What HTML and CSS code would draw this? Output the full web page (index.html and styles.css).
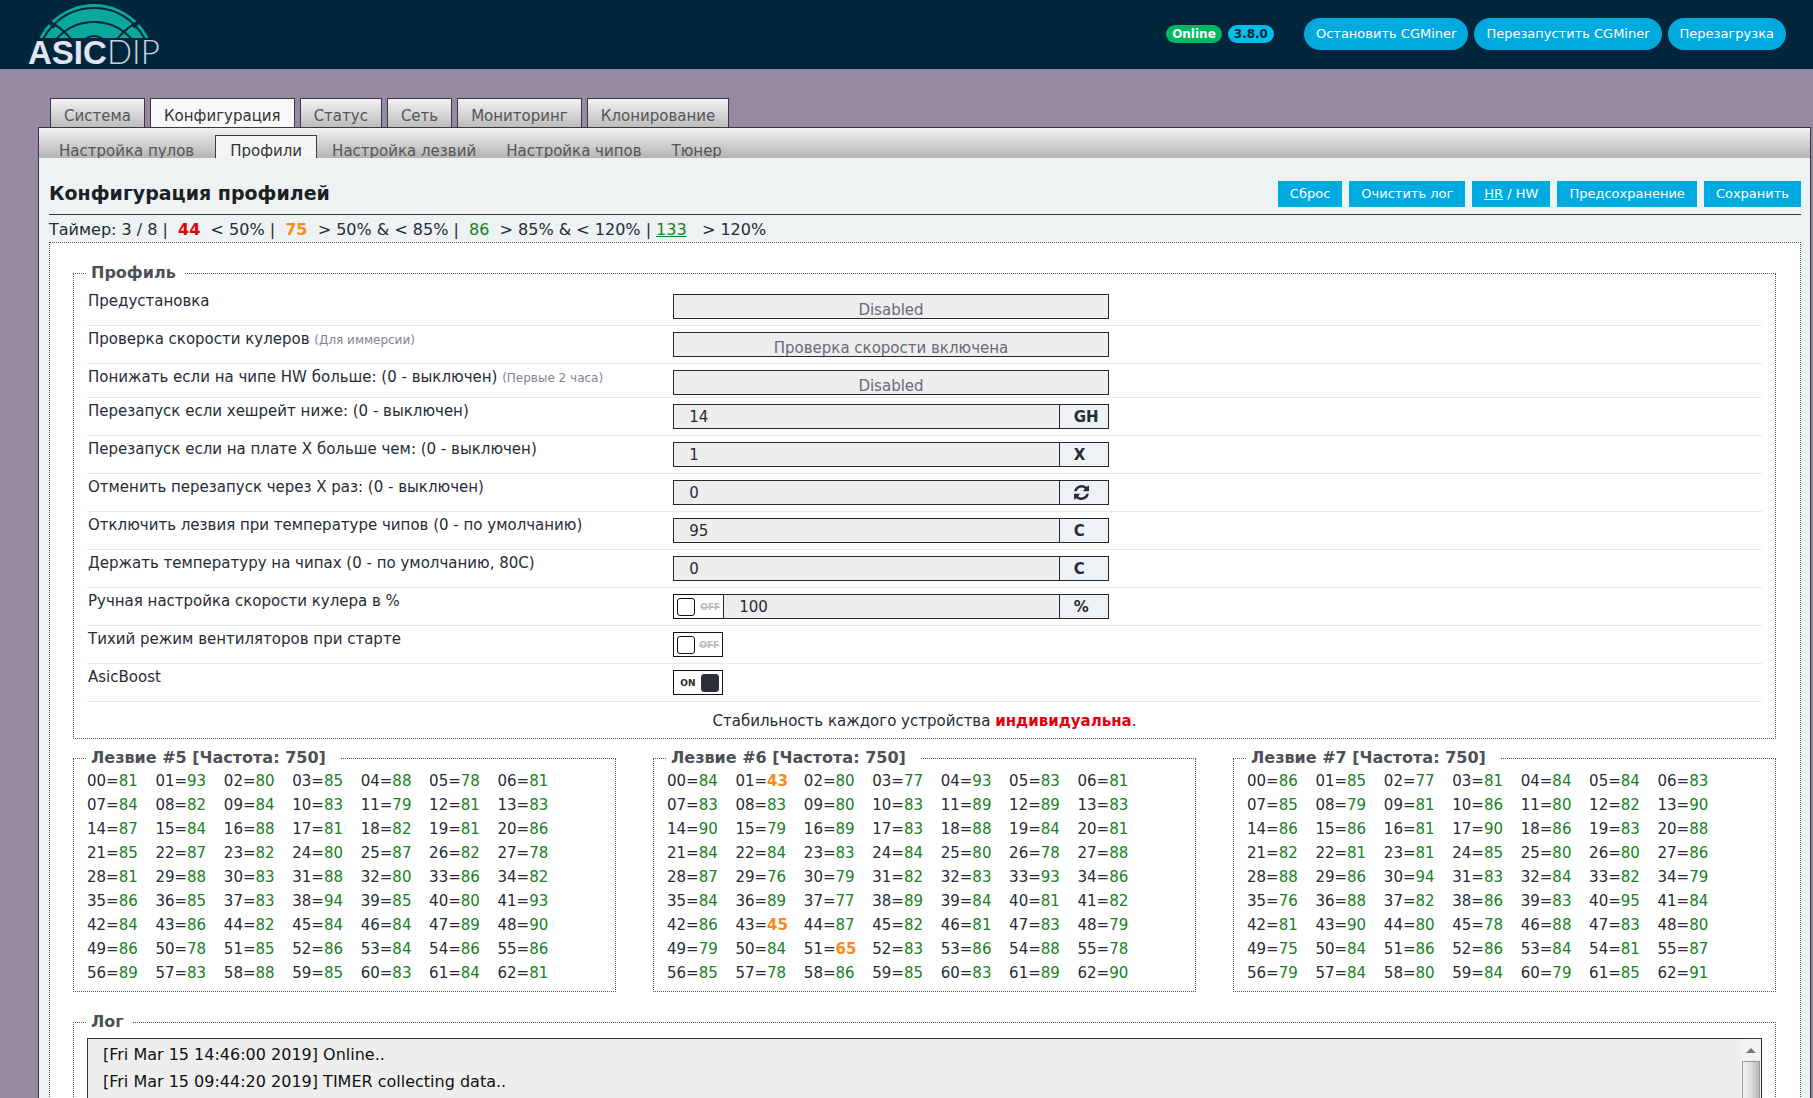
FILE: index.html
```html
<!DOCTYPE html>
<html lang="ru">
<head>
<meta charset="utf-8">
<title>Конфигурация профилей</title>
<link rel="stylesheet" href="styles.css">
</head>
<body>
<header class="topbar">
  <a class="logo" href="#" aria-label="ASICDIP">
    <svg width="150" height="69" viewBox="0 0 150 69">
      <defs>
        <clipPath id="dome"><rect x="0" y="0" width="150" height="38"/></clipPath>
      </defs>
      <g clip-path="url(#dome)">
        <circle cx="74" cy="65" r="61" fill="#0aa79d"/>
        <g fill="none" stroke="#00263c">
          <circle cx="74" cy="65" r="57" stroke-width="2"/>
          <circle cx="74" cy="72" r="50" stroke-width="2"/>
          <circle cx="74" cy="50" r="14" stroke-width="2"/>
          <path d="M28 21 Q40 26 51 39" stroke-width="2"/>
          <path d="M120 21 Q108 26 97 39" stroke-width="2"/>
          <path d="M24 17 L35 27 M124 17 L113 27" stroke-width="4"/>
        </g>
      </g>
      <text class="logo-bold" x="8" y="64">ASIC</text>
      <text class="logo-thin" x="87" y="64">DIP</text>
    </svg>
  </a>
  <div class="top-actions">
    <span class="badge badge-online">Online</span>
    <span class="badge badge-version">3.8.0</span>
    <button class="pill pill-first" type="button">Остановить CGMiner</button>
    <button class="pill" type="button">Перезапустить CGMiner</button>
    <button class="pill" type="button">Перезагрузка</button>
  </div>
</header>

<div class="shell">
  <nav class="tabs">
    <a class="tab" href="#">Система</a>
    <a class="tab active" href="#">Конфигурация</a>
    <a class="tab" href="#">Статус</a>
    <a class="tab" href="#">Сеть</a>
    <a class="tab" href="#">Мониторинг</a>
    <a class="tab" href="#">Клонирование</a>
  </nav>
  <main class="panel">
    <nav class="subtabs">
      <a class="subtab" href="#">Настройка пулов</a>
      <a class="subtab active" href="#">Профили</a>
      <a class="subtab" href="#">Настройка лезвий</a>
      <a class="subtab" href="#">Настройка чипов</a>
      <a class="subtab" href="#">Тюнер</a>
    </nav>

    <div class="content">
      <div class="heading">
        <h1>Конфигурация профилей</h1>
        <div class="actions">
          <button class="btn" type="button">Сброс</button>
          <button class="btn" type="button">Очистить лог</button>
          <button class="btn" type="button"><u>HR</u> / HW</button>
          <button class="btn" type="button">Предсохранение</button>
          <button class="btn" type="button">Сохранить</button>
        </div>
      </div>
      <p class="legend-line">Таймер: 3 / 8 |&nbsp; <b class="low">44</b>&nbsp; &lt; 50% |&nbsp; <b class="mid">75</b>&nbsp; &gt; 50% &amp; &lt; 85% |&nbsp; <span class="good">86</span>&nbsp; &gt; 85% &amp; &lt; 120% | <u class="good">133</u>&nbsp;&nbsp; &gt; 120%</p>

      <form class="board">
        <fieldset class="group profile">
          <legend>Профиль</legend>
          <div class="row">
            <label for="preset">Предустановка</label>
            <select id="preset"><option>Disabled</option></select>
          </div>
          <div class="row">
            <label for="fancheck">Проверка скорости кулеров <small>(Для иммерсии)</small></label>
            <select id="fancheck"><option>Проверка скорости включена</option></select>
          </div>
          <div class="row tight">
            <label for="hw">Понижать если на чипе HW больше: (0 - выключен) <small>(Первые 2 часа)</small></label>
            <select id="hw"><option>Disabled</option></select>
          </div>
          <div class="row">
            <label for="rate">Перезапуск если хешрейт ниже: (0 - выключен)</label>
            <div class="field"><input id="rate" type="text" value="14"><span class="unit">GH</span></div>
          </div>
          <div class="row">
            <label for="boardx">Перезапуск если на плате X больше чем: (0 - выключен)</label>
            <div class="field"><input id="boardx" type="text" value="1"><span class="unit">X</span></div>
          </div>
          <div class="row">
            <label for="cancel">Отменить перезапуск через X раз: (0 - выключен)</label>
            <div class="field"><input id="cancel" type="text" value="0"><span class="unit"><svg width="15" height="15" viewBox="0 0 1536 1536" fill="#262c36"><path d="M1511 928q0 5-1 7-64 268-268 434.500T764 1536q-146 0-282.500-55T238 1324l-129 129q-19 19-45 19t-45-19-19-45V960q0-26 19-45t45-19h448q26 0 45 19t19 45-19 45l-137 137q71 66 161 102t187 36q134 0 250-65t186-179q11-17 53-117 8-23 30-23h192q13 0 22.500 9.500t9.500 22.500zm25-800v448q0 26-19 45t-45 19h-448q-26 0-45-19t-19-45 19-45l138-138Q969 256 768 256q-134 0-250 65T332 500q-11 17-53 117-8 23-30 23H50q-13 0-22.500-9.500T18 608v-7q65-268 270-434.500T768 0q146 0 284 55.500T1297 212l130-129q19-19 45-19t45 19 19 45z"/></svg></span></div>
          </div>
          <div class="row">
            <label for="maxtemp">Отключить лезвия при температуре чипов (0 - по умолчанию)</label>
            <div class="field"><input id="maxtemp" type="text" value="95"><span class="unit">C</span></div>
          </div>
          <div class="row">
            <label for="keeptemp">Держать температуру на чипах (0 - по умолчанию, 80C)</label>
            <div class="field"><input id="keeptemp" type="text" value="0"><span class="unit">C</span></div>
          </div>
          <div class="row">
            <label for="fanspeed">Ручная настройка скорости кулера в %</label>
            <div class="field"><span class="toggle"><input type="checkbox" aria-label="Ручная настройка"><span class="off">OFF</span></span><input id="fanspeed" type="text" value="100"><span class="unit">%</span></div>
          </div>
          <div class="row">
            <label for="quiet">Тихий режим вентиляторов при старте</label>
            <span class="toggle"><input id="quiet" type="checkbox"><span class="off">OFF</span></span>
          </div>
          <div class="row">
            <label for="boost">AsicBoost</label>
            <span class="toggle"><span class="on">ON</span><input id="boost" type="checkbox" checked></span>
          </div>
          <p class="note">Стабильность каждого устройства <b>индивидуальна</b>.</p>
        </fieldset>

        <div class="blades" id="blades"></div>

        <fieldset class="group log">
          <legend>Лог</legend>
          <div class="logbox">
            <div class="lines">
              <p>[Fri Mar 15 14:46:00 2019] Online..</p>
              <p>[Fri Mar 15 09:44:20 2019] TIMER collecting data..</p>
            </div>
            <div class="scrollbar"><span class="arrow"></span><span class="thumb"></span></div>
          </div>
        </fieldset>
      </form>
    </div>
  </main>
</div>
<script src="blades.js"></script>
</body>
</html>
```
FILE: blades.js
```js
// Chip rates of each blade, in chip order, seven to a row.
const blades = [
  { id: 5, freq: 750, chips: `81 93 80 85 88 78 81 84 82 84 83 79 81 83 87 84 88 81 82 81 86
    85 87 82 80 87 82 78 81 88 83 88 80 86 82 86 85 83 94 85 80 93
    84 86 82 84 84 89 90 86 78 85 86 84 86 86 89 83 88 85 83 84 81` },
  { id: 6, freq: 750, chips: `84 43 80 77 93 83 81 83 83 80 83 89 89 83 90 79 89 83 88 84 81
    84 84 83 84 80 78 88 87 76 79 82 83 93 86 84 89 77 89 84 81 82
    86 45 87 82 81 83 79 79 84 65 83 86 88 78 85 78 86 85 83 89 90` },
  { id: 7, freq: 750, chips: `86 85 77 81 84 84 83 85 79 81 86 80 82 90 86 86 81 90 86 83 88
    82 81 81 85 80 80 86 88 86 94 83 84 82 79 76 88 82 86 83 95 84
    81 90 80 78 88 83 80 75 84 86 86 84 81 87 79 84 80 84 79 85 91` }
];

const perRow = 7;

function cell(value, index) {
  const tag = value < 70 ? `<b class="mid">${value}</b>` : `<span class="good">${value}</span>`;
  return `<td>${String(index).padStart(2, "0")}=${tag}</td>`;
}

document.getElementById("blades").innerHTML = blades.map(({ id, freq, chips }) => {
  const cells = chips.split(/\s+/).map((v, i) => cell(Number(v), i));
  let rows = "";
  for (let i = 0; i < cells.length; i += perRow) {
    rows += `<tr>${cells.slice(i, i + perRow).join("")}</tr>`;
  }
  return `<fieldset class="group blade"><legend>Лезвие #${id} [Частота: ${freq}]</legend><table>${rows}</table></fieldset>`;
}).join("");
```
FILE: styles.css
```css
* {
  box-sizing: border-box;
}

body {
  margin: 0;
  height: 100vh;
  overflow: hidden;
  background: #958aa1;
  color: #262c36;
  font: 15px/24px "DejaVu Sans", Verdana, sans-serif;
}

h1,
p {
  margin: 0;
}

a {
  color: inherit;
  text-decoration: none;
}

button,
input,
select {
  font: inherit;
}

/* Top bar */
.topbar {
  display: flex;
  justify-content: space-between;
  align-items: center;
  height: 69px;
  padding: 0 27px 0 20px;
  background: #00263c;
}

.logo {
  display: flex;
}

.logo svg {
  overflow: visible;
}

.logo-bold {
  font: bold 33px "Liberation Sans", sans-serif;
  fill: #dfe3f2;
}

.logo-thin {
  font: 300 33px Lato, sans-serif;
  fill: #c9d3e2;
}

.top-actions {
  display: flex;
  align-items: center;
  gap: 6px;
  padding-bottom: 2px;
}

.badge {
  padding: 0 6px;
  border-radius: 9px;
  font-size: 12px;
  font-weight: bold;
  line-height: 18px;
}

.badge-online {
  background: #00b862;
  color: #fff;
}

.badge-version {
  background: #00bfe6;
  color: #00263c;
}

.pill,
.btn {
  border: 0;
  background: #00a9de;
  color: #fff;
}

.pill {
  height: 32px;
  padding: 0 12px;
  border-radius: 16px;
  font-size: 13px;
}

.pill-first {
  margin-left: 24px;
}

/* Tabs */
.shell {
  padding: 29px 2px 0 38px;
}

.tabs {
  display: flex;
  gap: 5px;
  padding-left: 12px;
}

.tab {
  height: 29px;
  padding: 5px 13px 0;
  border: 1px solid #3a3644;
  border-bottom: 0;
  background: linear-gradient(#f2f2f2, #bdbdbd);
  color: #555;
}

.tab.active {
  background: #f8f8f8;
  color: #333;
}

.panel {
  border: 1px solid #3a3644;
  border-bottom: 0;
  background: #edf2f2;
}

.subtabs {
  display: flex;
  align-items: flex-end;
  height: 30px;
  padding-left: 5px;
  overflow: hidden;
  background: linear-gradient(#f2f2f2, #b4b4b4);
}

.subtab {
  height: 23px;
  padding: 4px 15px 0;
  color: #555;
}

.subtab.active {
  margin-left: 6px;
  padding: 3px 14px 0;
  border: 1px solid #3a3644;
  border-bottom: 0;
  background: #f4f6f6;
  color: #333;
}

/* Heading */
.content {
  padding: 23px 9px 0 10px;
}

.heading {
  display: flex;
  justify-content: space-between;
  height: 34px;
  border-bottom: 1px solid #333;
}

h1 {
  font-size: 19px;
  line-height: 24px;
  color: #1c1f26;
}

.actions {
  display: flex;
  gap: 7px;
}

.btn {
  height: 26px;
  padding: 0 12px;
  font-size: 13px;
}

.legend-line {
  height: 27px;
  font-size: 16px;
  line-height: 30px;
}

.low {
  color: #e3000b;
}

.mid {
  color: #f98a1c;
}

.good {
  color: #178024;
}

/* Form board */
.board {
  padding: 18px 24px 0 23px;
  border: 1px dotted #555;
  border-bottom: 0;
  background: #fff;
}

.group {
  min-width: 0;
  margin: 0;
  padding: 0 13px;
  border: 1px dotted #555;
}

.group legend {
  padding: 0 15px 0 4px;
  font-size: 16px;
  font-weight: bold;
  color: #4c5158;
}

.profile legend,
.log legend {
  padding-right: 8px;
}

.profile {
  padding-top: 3px;
}

.row {
  display: flex;
  height: 38px;
  padding-top: 6px;
  border-bottom: 1px solid #e9e9e9;
}

.row.tight {
  height: 34px;
}

.row > label {
  flex: 0 0 35%;
  line-height: 14px;
  padding-left: 1px;
}

.row > select,
.field {
  width: 26%;
}

.row small {
  font-size: 12px;
  color: #7d8594;
}

select {
  height: 25px;
  padding: 3px 4px 0;
  border: 1px solid #26262c;
  border-radius: 0;
  appearance: none;
  background: #eee;
  color: #666c76;
  text-align-last: center;
}

.field {
  display: flex;
  height: 25px;
}

.field input[type="text"] {
  flex: 1;
  min-width: 0;
  padding: 0 15px;
  border: 1px solid #26262c;
  border-radius: 0;
  background: #eee;
  color: #262c36;
}

.unit {
  display: flex;
  align-items: center;
  width: 49px;
  padding-left: 14px;
  border: 1px solid #26262c;
  border-left: 0;
  background: #edf2f6;
  font-weight: bold;
}

.toggle {
  display: flex;
  align-items: center;
  justify-content: space-between;
  width: 50px;
  height: 25px;
  padding: 0 3px;
  border: 1px solid #111;
  background: #fff;
  font-size: 9px;
}

.field .toggle {
  border-right: 0;
}

.toggle input {
  width: 18px;
  height: 18px;
  margin: 0;
  border: 1px solid #111;
  border-radius: 3px;
  appearance: none;
  background: #fff;
}

.toggle input:checked {
  border-color: #2b2f3a;
  background: #2b2f3a;
}

.off {
  color: #bbb;
  font-weight: bold;
  text-decoration: line-through;
}

.on {
  padding-left: 3px;
  font-weight: bold;
}

.note {
  padding: 7px 0 5px;
  text-align: center;
}

.note b {
  color: #e3000b;
}

/* Blades */
.blades {
  display: grid;
  grid-template-columns: repeat(3, 1fr);
  gap: 37px;
  padding-top: 7px;
}

.blade {
  padding-bottom: 6px;
}

.blade table {
  table-layout: fixed;
  width: 479px;
  margin-top: -1px;
  border-collapse: collapse;
}

.blade td {
  height: 24px;
  padding: 0;
  white-space: nowrap;
}

/* Log */
.log {
  margin-top: 18px;
}

.logbox {
  display: flex;
  height: 240px;
  margin-top: 4px;
  border: 1px solid #33333a;
  background: #eee;
}

.lines {
  flex: 1;
  padding: 2px 15px;
  font-size: 16px;
  line-height: 27px;
  color: #111;
}

.scrollbar {
  display: flex;
  flex-direction: column;
  align-items: center;
  width: 20px;
  background: #f2f2f2;
}

.arrow {
  margin: 9px 0 8px;
  border: 5px solid transparent;
  border-top: 0;
  border-bottom: 5px solid #777;
}

.thumb {
  flex: 1;
  width: 18px;
  border: 1px solid #999;
  background: linear-gradient(90deg, #f4f4f4, #dcdcdc 50%, #b8b8b8);
}
```
